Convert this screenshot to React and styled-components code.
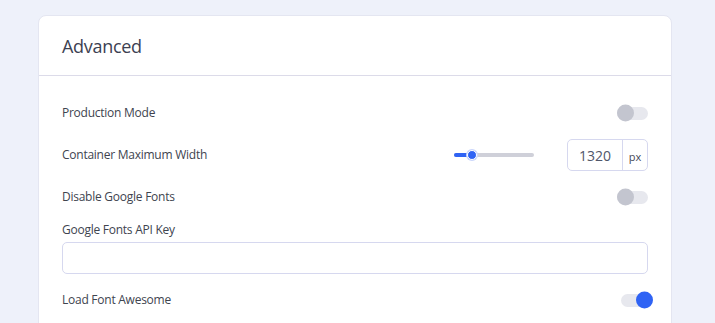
import React from "react";
import styled, { createGlobalStyle } from "styled-components";

const Global = createGlobalStyle`
  html, body { margin: 0; padding: 0; background: #eef1fa; }
  body { font-family: "Open Sans", "Noto Sans", sans-serif; color: #3f4450; }
`;

const Page = styled.div`
  padding: 15px 43px 0 38px;
`;

const Card = styled.section`
  width: 634px;
  background: #fff;
  border: 1px solid #e4e6f1;
  border-radius: 8px;
  box-sizing: border-box;
`;

const Header = styled.header`
  height: 59px;
  display: flex;
  align-items: center;
  padding: 0 23px;
  border-bottom: 1px solid #dcdbe9;
  font-size: 18px;
  letter-spacing: -0.3px;
  color: #3c4152;
`;

const Body = styled.div`
  padding: 16px 23px 20px;
`;

const Row = styled.div`
  height: 42px;
  display: flex;
  align-items: center;
  justify-content: space-between;
`;

const Label = styled.span`
  font-size: 12px;
  line-height: 16px;
  letter-spacing: -0.25px;
  color: #40444f;
`;

const Controls = styled.div`
  display: flex;
  align-items: center;
  gap: 33px;
`;

const Track = styled.div`
  width: 80px;
  height: 4px;
  border-radius: 2px;
  background: #cfd0d9;
  position: relative;
`;

const Fill = styled.div`
  height: 100%;
  border-radius: 2px;
  background: #2f63f4;
`;

const Thumb = styled.div`
  position: absolute;
  top: 50%;
  width: 8px;
  height: 8px;
  border-radius: 50%;
  background: #2f63f4;
  border: 1.5px solid #fff;
  box-shadow: 0 0 0 1px #c9d5fb;
  transform: translate(-50%, -50%);
`;

const Unit = styled.div`
  display: flex;
  width: 81px;
  height: 32px;
  border: 1px solid #d6d8ef;
  border-radius: 5px;
  box-sizing: border-box;
`;

const NumBox = styled.div`
  flex: 1;
  display: flex;
  align-items: center;
  justify-content: center;
  font-size: 14px;
  color: #50566a;
  border-right: 1px solid #d6d8ef;
`;

const UnitLabel = styled.div`
  width: 24px;
  display: flex;
  align-items: center;
  justify-content: center;
  font-size: 11px;
  color: #464a57;
  padding-top: 2px;
`;

const Toggle = styled.div`
  position: relative;
  width: 31px;
  height: 13px;
  border-radius: 7px;
  background: #e7e8ee;
  margin-right: ${(p) => (p.$on ? "-4px" : "0")};
  &::after {
    content: "";
    position: absolute;
    top: 50%;
    left: ${(p) => (p.$on ? "15px" : "0")};
    width: 17px;
    height: 17px;
    border-radius: 50%;
    background: ${(p) => (p.$on ? "#2f63f4" : "#c3c5cf")};
    transform: translateY(-50%);
  }
`;

const Field = styled.div`
  padding-top: 4px;
  display: flex;
  flex-direction: column;
  gap: 4px;
`;

const TextInput = styled.div`
  height: 32px;
  border: 1px solid #d6d8ef;
  border-radius: 5px;
  box-sizing: border-box;
`;

const Spacer = styled.div`
  height: 5px;
`;

export default function App() {
  const pct = 22;
  return (
    <>
      <Global />
      <Page>
        <Card>
          <Header>Advanced</Header>
          <Body>
            <Row>
              <Label>Production Mode</Label>
              <Toggle />
            </Row>
            <Row>
              <Label>Container Maximum Width</Label>
              <Controls>
                <Track>
                  <Fill style={{ width: `${pct}%` }} />
                  <Thumb style={{ left: `${pct}%` }} />
                </Track>
                <Unit>
                  <NumBox>1320</NumBox>
                  <UnitLabel>px</UnitLabel>
                </Unit>
              </Controls>
            </Row>
            <Row>
              <Label>Disable Google Fonts</Label>
              <Toggle />
            </Row>
            <Field>
              <Label>Google Fonts API Key</Label>
              <TextInput />
            </Field>
            <Spacer />
            <Row>
              <Label>Load Font Awesome</Label>
              <Toggle $on />
            </Row>
          </Body>
        </Card>
      </Page>
    </>
  );
}
